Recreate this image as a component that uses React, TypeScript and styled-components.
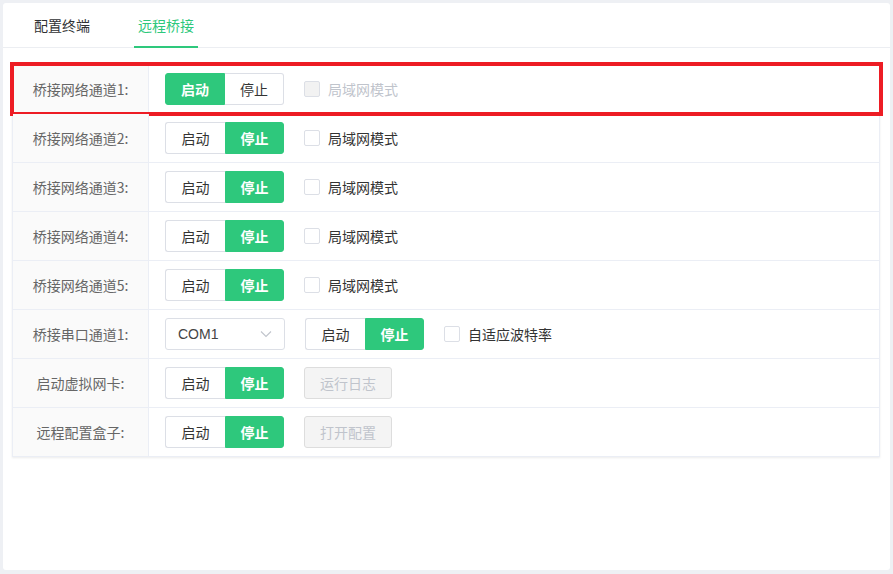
import React from "react";
import styled, { createGlobalStyle } from "styled-components";

const GREEN = "#2ec87c";
const BORDER = "#dcdfe6";
const LINE = "#ebeef5";

const GlobalStyle = createGlobalStyle`
  html, body {
    margin: 0;
    padding: 0;
    background: #eef0f4;
    font-family: "Noto Sans CJK SC", "Noto Sans", "Liberation Sans", sans-serif;
    font-size: 14px;
    color: #333;
  }
  * { box-sizing: border-box; }
`;

type Channel = {
  label: string;
  kind: "lan" | "serial" | "nic" | "box";
  on: boolean;
  highlighted?: boolean;
};

const rows: Channel[] = [
  { label: "桥接网络通道1:", kind: "lan", on: true, highlighted: true },
  { label: "桥接网络通道2:", kind: "lan", on: false },
  { label: "桥接网络通道3:", kind: "lan", on: false },
  { label: "桥接网络通道4:", kind: "lan", on: false },
  { label: "桥接网络通道5:", kind: "lan", on: false },
  { label: "桥接串口通道1:", kind: "serial", on: false },
  { label: "启动虚拟网卡:", kind: "nic", on: false },
  { label: "远程配置盒子:", kind: "box", on: false },
];

const App = () => {
  return (
    <>
      <GlobalStyle />
      <Page>
        <Card>
          <TabNav>
            <Tab>配置终端</Tab>
            <Tab active>远程桥接</Tab>
          </TabNav>
          <Table>
            {rows.map((r) => (
              <Row key={r.label} highlighted={r.highlighted}>
                <LabelCell>{r.label}</LabelCell>
                <ContentCell>
                  {r.kind === "serial" && (
                    <Select>
                      <span>COM1</span>
                      <svg width="12" height="8" viewBox="0 0 12 8">
                        <polyline
                          points="1,1.5 6,6.5 11,1.5"
                          fill="none"
                          stroke="#c0c4cc"
                          strokeWidth="1.1"
                        />
                      </svg>
                    </Select>
                  )}
                  <Toggle>
                    <ToggleBtn active={r.on}>启动</ToggleBtn>
                    <ToggleBtn active={!r.on}>停止</ToggleBtn>
                  </Toggle>
                  {(r.kind === "lan" || r.kind === "serial") && (
                    <Check disabled={r.on}>
                      <Box disabled={r.on} />
                      <span>{r.kind === "lan" ? "局域网模式" : "自适应波特率"}</span>
                    </Check>
                  )}
                  {r.kind === "nic" && <PlainBtn disabled>运行日志</PlainBtn>}
                  {r.kind === "box" && <PlainBtn disabled>打开配置</PlainBtn>}
                </ContentCell>
              </Row>
            ))}
          </Table>
        </Card>
      </Page>
    </>
  );
};

export default App;

const Page = styled.div`
  height: 574px;
  padding: 3px 3px 4px 3px;
`;

const Card = styled.div`
  height: 100%;
  background: #fff;
  border-radius: 3px;
  padding: 0 10px 0 9px;
`;

const TabNav = styled.div`
  display: flex;
  height: 45px;
  margin: 0 -10px 0 -9px;
  padding-left: 27px;
  border-bottom: 1px solid #eceef2;
`;

const Tab = styled.div<{ active?: boolean }>`
  padding: 0 4px;
  margin-right: 40px;
  line-height: 44px;
  font-size: 14px;
  color: ${(p) => (p.active ? GREEN : "#303133")};
  border-bottom: 2px solid ${(p) => (p.active ? GREEN : "transparent")};
  height: 45px;
`;

const Table = styled.div`
  margin-top: 16px;
  border: 1px solid ${LINE};
  box-shadow: 0 1px 2px rgba(0, 0, 0, 0.08);
`;

const Row = styled.div<{ highlighted?: boolean }>`
  position: relative;
  display: flex;
  height: 49px;
  border-bottom: 1px solid ${LINE};
  &:last-child {
    border-bottom: none;
    height: 48px;
  }
  ${(p) =>
    p.highlighted &&
    `
    &::after {
      content: "";
      position: absolute;
      left: -3px;
      right: -4px;
      top: -3px;
      bottom: -3px;
      border: 4px solid #ed1c24;
      pointer-events: none;
    }
  `}
`;

const LabelCell = styled.div`
  width: 136px;
  flex: none;
  display: flex;
  align-items: center;
  justify-content: center;
  background: #fafafa;
  border-right: 1px solid ${LINE};
  color: #666;
  font-size: 14px;
`;

const ContentCell = styled.div`
  flex: 1;
  display: flex;
  align-items: center;
  gap: 20px;
  padding-left: 16px;
`;

const Toggle = styled.div`
  display: flex;
  height: 32px;
`;

const ToggleBtn = styled.div<{ active?: boolean }>`
  width: 60px;
  height: 32px;
  display: flex;
  align-items: center;
  justify-content: center;
  font-size: 14px;
  font-weight: ${(p) => (p.active ? 600 : 400)};
  color: ${(p) => (p.active ? "#fff" : "#333")};
  background: ${(p) => (p.active ? GREEN : "#fff")};
  border: 1px solid ${(p) => (p.active ? GREEN : BORDER)};
  &:first-child {
    border-radius: 3px 0 0 3px;
    ${(p) => !p.active && "border-right: none;"}
  }
  &:last-child {
    width: 59px;
    border-radius: 0 3px 3px 0;
    ${(p) => !p.active && "border-left: none;"}
  }
`;

const Check = styled.label<{ disabled?: boolean }>`
  display: flex;
  align-items: center;
  gap: 8px;
  font-size: 14px;
  color: ${(p) => (p.disabled ? "#c0c4cc" : "#333")};
`;

const Box = styled.span<{ disabled?: boolean }>`
  width: 16px;
  height: 16px;
  border: 1px solid ${BORDER};
  border-radius: 2px;
  background: ${(p) => (p.disabled ? "#f2f2f2" : "#fff")};
`;

const Select = styled.div`
  width: 120px;
  height: 32px;
  display: flex;
  align-items: center;
  justify-content: space-between;
  padding: 0 12px;
  border: 1px solid ${BORDER};
  border-radius: 3px;
  font-family: "Liberation Sans", "Noto Sans CJK SC", sans-serif;
  font-size: 14px;
  color: #444;
`;

const PlainBtn = styled.button`
  width: 88px;
  height: 32px;
  font-family: inherit;
  font-size: 14px;
  color: #c0c4cc;
  background: #f4f4f4;
  border: 1px solid #dddddd;
  border-radius: 3px;
  padding: 0;
`;
